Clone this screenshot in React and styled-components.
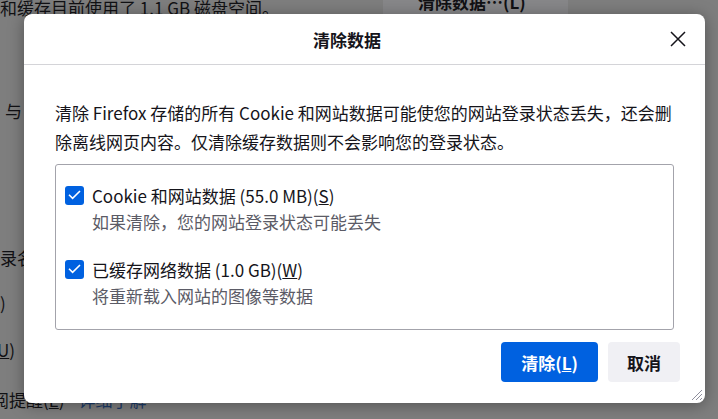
import React from 'react';
import styled, { createGlobalStyle } from 'styled-components';

const GlobalStyle = createGlobalStyle`
  html, body {
    margin: 0;
    padding: 0;
    overflow: hidden;
  }
  body {
    font-family: "Noto Sans", "Noto Sans CJK SC", sans-serif;
    -webkit-font-smoothing: antialiased;
  }
`;

const StyledPage = styled.div`
  position: relative;
  width: 718px;
  height: 419px;
  overflow: hidden;
  background: #7e7e7e;
  color: #111114;
  font-family: "Noto Sans CJK SC", "Noto Sans", sans-serif;
  font-size: 17px;
`;

const StyledBgLine = styled.div`
  display: flex;
  align-items: center;
  height: 24px;
  line-height: 24px;
  white-space: nowrap;
  margin-top: ${p => p.gap}px;
  margin-left: ${p => p.shift || 0}px;
`;

const StyledBgButton = styled.div`
  margin-left: auto;
  margin-right: 150px;
  width: 185px;
  height: 40px;
  margin-top: -16px;
  padding-top: 10px;
  box-sizing: border-box;
  background: #878789;
  font-weight: 700;
  padding-left: 35px;
`;

const StyledBgLink = styled.span`
  margin-left: 14px;
  color: #1b3a68;
`;

const StyledDialog = styled.div`
  position: absolute;
  left: 24px;
  top: 14px;
  width: 681px;
  height: 389px;
  display: flex;
  flex-direction: column;
  background: #fff;
  border-radius: 8px;
  box-shadow: 0 2px 16px rgba(0, 0, 0, 0.35);
  color: #15141a;
`;

const StyledHeader = styled.div`
  display: flex;
  align-items: center;
  height: 50px;
  padding: 0 11px 0 8px;
  border-bottom: 1px solid #d4d4d8;
`;

const StyledTitle = styled.div`
  flex: 1;
  text-align: center;
  font-weight: 700;
  font-size: 17px;
`;

const StyledClose = styled.button`
  width: 32px;
  height: 32px;
  display: flex;
  align-items: center;
  justify-content: center;
  border: none;
  background: transparent;
  padding: 0;
`;

const StyledBody = styled.div`
  padding: 33px 31px 0;
`;

const StyledIntro = styled.p`
  margin: 0;
  font-size: 17px;
  line-height: 29px;
`;

const StyledOptions = styled.div`
  margin-top: 8px;
  border: 1px solid #a3a3ab;
  border-radius: 3px;
  padding: 18px 0 21px 9px;
  display: flex;
  flex-direction: column;
  gap: 23px;
`;

const StyledOption = styled.div`
  display: flex;
  flex-direction: column;
  gap: 3px;
`;

const StyledOptionLabel = styled.label`
  display: flex;
  align-items: center;
  gap: 8px;
  height: 24px;
  font-size: 17px;
`;

const StyledCheckbox = styled.span`
  width: 19px;
  height: 19px;
  border-radius: 3px;
  background: #0061e0;
  display: flex;
  align-items: center;
  justify-content: center;
`;

const StyledHint = styled.div`
  margin-left: 27px;
  line-height: 24px;
  font-size: 17px;
  color: #5b5b66;
`;

const StyledFooter = styled.div`
  display: flex;
  justify-content: flex-end;
  gap: 10px;
  padding: 12px 25px 0 0;
`;

const StyledButton = styled.button`
  height: 40px;
  padding: 0 ${p => (p.primary ? 20 : 19)}px;
  border: none;
  border-radius: 4px;
  font-family: "Noto Sans CJK SC", "Noto Sans", sans-serif;
  font-size: 17px;
  font-weight: 700;
  background: ${p => (p.primary ? '#0061e0' : '#f0f0f4')};
  color: ${p => (p.primary ? '#fff' : '#15141a')};
`;

const StyledGrip = styled.svg`
  position: absolute;
  right: 2px;
  bottom: 2px;
`;

const Check = () => (
  <StyledCheckbox>
    <svg width="13" height="10" viewBox="0 0 13 10">
      <path d="M1 4.8 L4.6 8.4 L12 1" fill="none" stroke="#fff" strokeWidth="1.6" />
    </svg>
  </StyledCheckbox>
);

const options = [
  { label: 'Cookie 和网站数据 (55.0 MB)(', key: 'S', hint: '如果清除，您的网站登录状态可能丢失' },
  { label: '已缓存网络数据 (1.0 GB)(', key: 'W', hint: '将重新载入网站的图像等数据' },
];

const App = () => (
  <StyledPage>
    <GlobalStyle />
    <StyledBgLine gap={-4}>
      和缓存目前使用了 1.1 GB 磁盘空间。
      <StyledBgButton>清除数据…(L)</StyledBgButton>
    </StyledBgLine>
    <StyledBgLine gap={79} shift={-12}>，与</StyledBgLine>
    <StyledBgLine gap={123}>录名</StyledBgLine>
    <StyledBgLine gap={21}>)</StyledBgLine>
    <StyledBgLine gap={23} shift={-3}><u>U</u>)</StyledBgLine>
    <StyledBgLine gap={26} shift={-8}>
      阅提醒(<u>E</u>)<StyledBgLink>详细了解</StyledBgLink>
    </StyledBgLine>

    <StyledDialog>
      <StyledHeader>
        <StyledTitle>清除数据</StyledTitle>
        <StyledClose>
          <svg width="16" height="16" viewBox="0 0 16 16">
            <path d="M1 1 L15 15 M15 1 L1 15" stroke="#15141a" strokeWidth="1.5" />
          </svg>
        </StyledClose>
      </StyledHeader>
      <StyledBody>
        <StyledIntro>
          清除 Firefox 存储的所有 Cookie 和网站数据可能使您的网站登录状态丢失，还会删除离线网页内容。仅清除缓存数据则不会影响您的登录状态。
        </StyledIntro>
        <StyledOptions>
          {options.map(o => (
            <StyledOption key={o.key}>
              <StyledOptionLabel>
                <Check />
                <span>
                  {o.label}
                  <u>{o.key}</u>)
                </span>
              </StyledOptionLabel>
              <StyledHint>{o.hint}</StyledHint>
            </StyledOption>
          ))}
        </StyledOptions>
      </StyledBody>
      <StyledFooter>
        <StyledButton primary>
          清除(<u>L</u>)
        </StyledButton>
        <StyledButton>取消</StyledButton>
      </StyledFooter>
      <StyledGrip width="14" height="14" viewBox="0 0 14 14">
        <path d="M13 3 L3 13 M13 7 L7 13 M13 11 L11 13" stroke="#8f8f9d" strokeWidth="1" />
      </StyledGrip>
    </StyledDialog>
  </StyledPage>
);

export default App;
